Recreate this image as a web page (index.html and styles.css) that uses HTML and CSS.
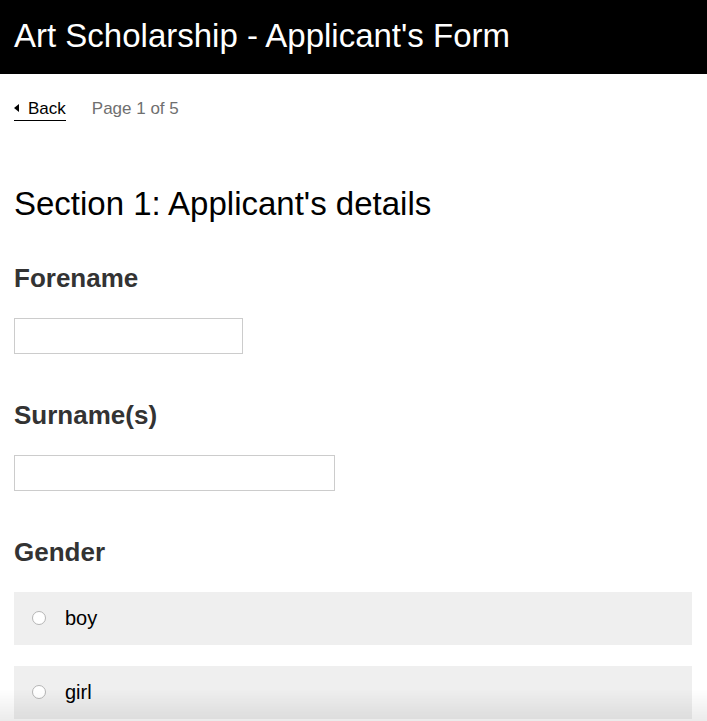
FILE: index.html
```html
<!DOCTYPE html>
<html lang="en">
<head>
  <meta charset="UTF-8">
  <title>Art Scholarship - Applicant's Form</title>
  <link rel="stylesheet" href="styles.css">
</head>
<body>
  <header class="topbar">
    <h1>Art Scholarship - Applicant's Form</h1>
  </header>

  <div class="page">
    <div class="pager">
      <a href="#" class="back"><span class="caret"></span>Back</a>
      <span class="count">Page 1 of 5</span>
    </div>

    <h2 class="section-title">Section 1: Applicant's details</h2>

    <div class="field">
      <label for="forename">Forename</label>
      <input type="text" id="forename" class="short">
    </div>

    <div class="field">
      <label for="surname">Surname(s)</label>
      <input type="text" id="surname" class="medium">
    </div>

    <div class="field">
      <label>Gender</label>
      <div class="option"><span class="radio"></span>boy</div>
      <div class="option"><span class="radio"></span>girl</div>
    </div>
  </div>

  <div class="bottom-shade"></div>
</body>
</html>
```

FILE: styles.css
```css
body {
  font-family: "Liberation Sans", Arial, sans-serif;
  margin: 0;
  background: #fff;
  color: #000;
}

.topbar {
  background: #000;
  height: 74px;
  display: flex;
  align-items: center;
  padding: 0 14px;
}

.topbar h1 {
  margin: 0;
  color: #fff;
  font-size: 33px;
  font-weight: normal;
  padding-bottom: 3px;
}

.page {
  padding: 0 15px 0 14px;
}

.pager {
  display: flex;
  align-items: center;
  gap: 26px;
  margin-top: 25px;
  font-size: 17px;
}

.back {
  color: #000;
  text-decoration: none;
  border-bottom: 1px solid #000;
  padding-bottom: 1px;
  display: flex;
  align-items: center;
}

.caret {
  width: 0;
  height: 0;
  border-top: 4px solid transparent;
  border-bottom: 4px solid transparent;
  border-right: 5px solid #000;
  margin-right: 9px;
  margin-top: -2px;
}

.count {
  color: #6f6f6f;
  padding-bottom: 2px;
}

.section-title {
  font-size: 33px;
  font-weight: normal;
  margin: 64px 0 0;
}

.field {
  margin-top: 40px;
}

.field + .field {
  margin-top: 46px;
}

.field label {
  display: block;
  font-size: 26px;
  font-weight: bold;
  color: #333;
  margin-bottom: 24px;
}

.field input {
  display: block;
  height: 36px;
  box-sizing: border-box;
  border: 1px solid #ccc;
  margin: 0;
  padding: 0 8px;
  font-size: 18px;
}

.short { width: 229px; }
.medium { width: 321px; }

.option {
  background: #efefef;
  height: 53px;
  display: flex;
  align-items: center;
  padding-left: 18px;
  font-size: 20px;
  margin-bottom: 21px;
}

.radio {
  width: 12px;
  height: 12px;
  border-radius: 50%;
  border: 1px solid #b5b5b5;
  background: #fff;
  margin-right: 19px;
  margin-top: -2px;
}

.bottom-shade {
  position: fixed;
  left: 0;
  right: 0;
  bottom: 0;
  height: 32px;
  background: linear-gradient(rgba(0, 0, 0, 0), rgba(0, 0, 0, 0.08));
  pointer-events: none;
}
```
